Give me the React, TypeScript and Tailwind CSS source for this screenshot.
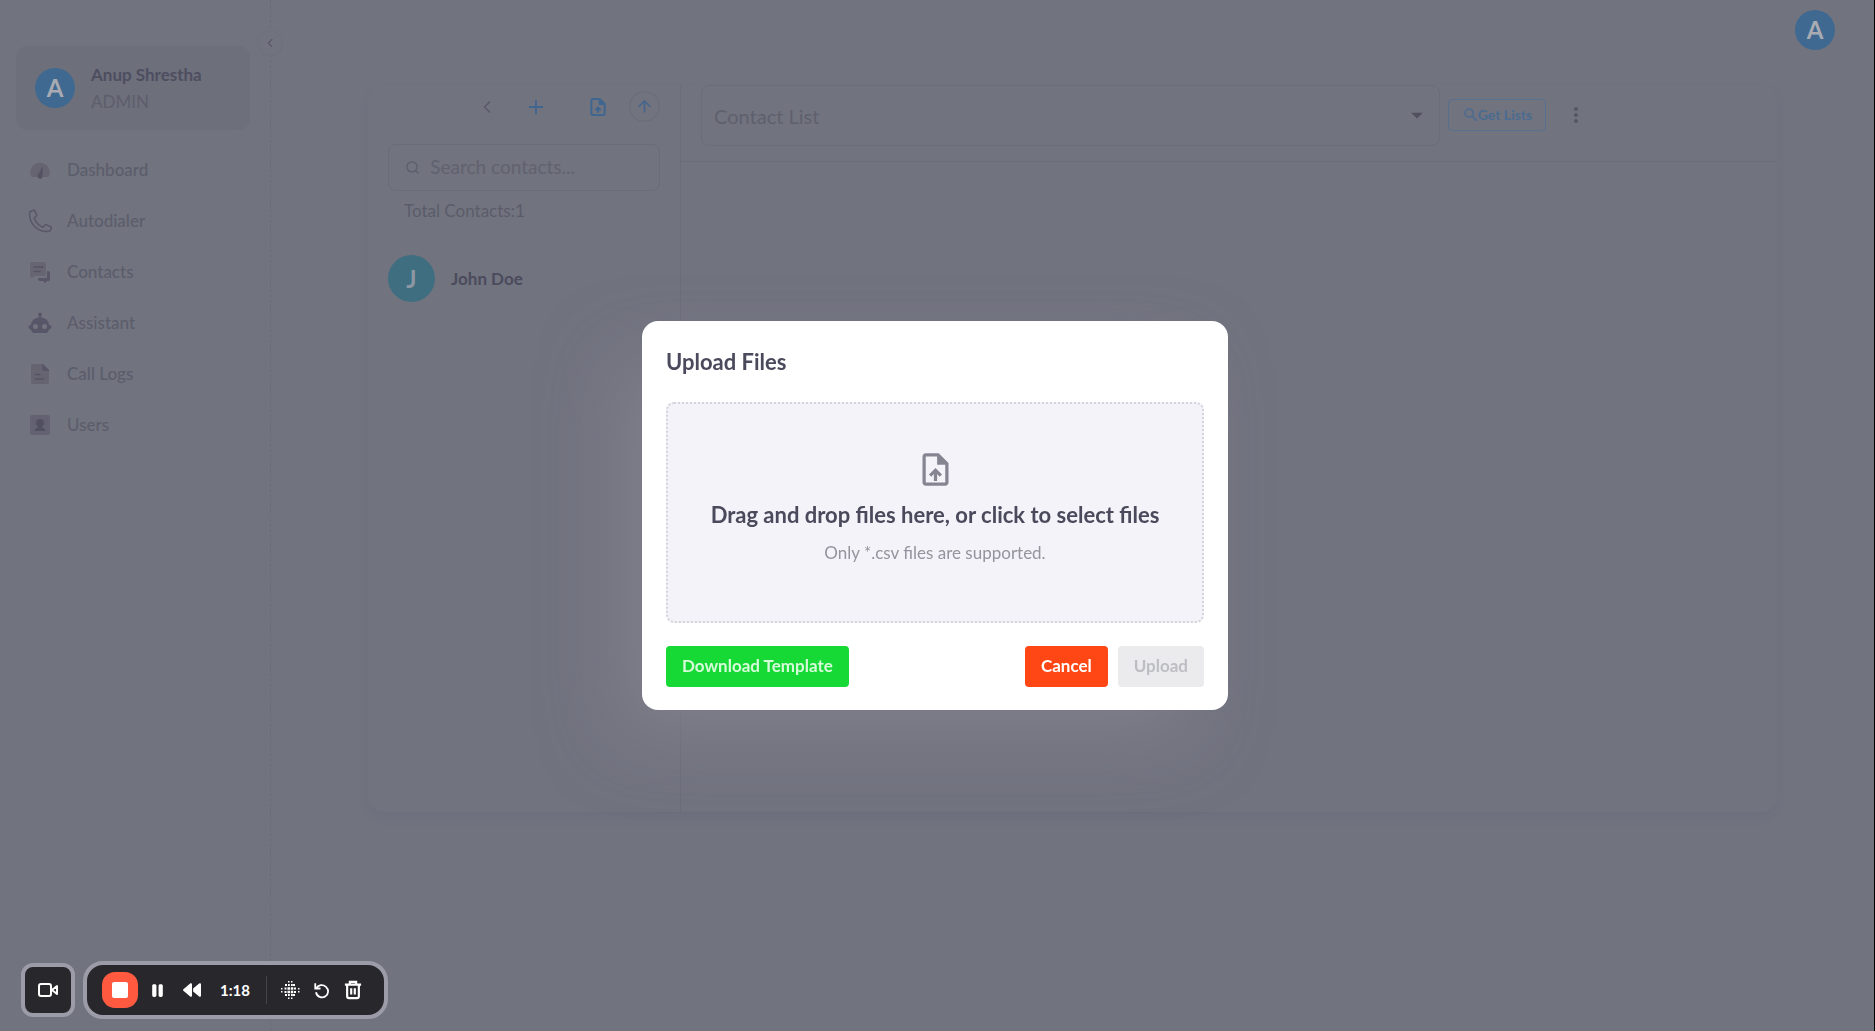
import type { ReactNode } from "react";
import { MdMoreVert, MdSearch, MdUploadFile, MdArrowDropDown } from "react-icons/md";
import { FaPause, FaBackward } from "react-icons/fa6";
import { ArrowUp, ChevronLeft, Plus, Search } from "lucide-react";

const navItems: { label: string; icon: ReactNode }[] = [
  {
    label: "Dashboard",
    icon: (
      <svg viewBox="0 0 24 24" className="size-6">
        <path d="M3.5 19a9.7 9.7 0 1 1 17 0z" fill="#676472" />
        <path d="M14.8 8 10 16.6a2.6 2.6 0 1 0 4.6 1.2z" fill="#555263" />
      </svg>
    ),
  },
  {
    label: "Autodialer",
    icon: (
      <svg viewBox="0 0 24 24" className="size-6" fill="none" stroke="#585868" strokeWidth="1.5" strokeLinejoin="round">
        <path d="M1.5 4.5C1.5 15 9 22.5 19.5 22.5h.8c.8 0 1.500-.4 1.900-1l1.200-2.300c.2-.6 0-1-.5-1.300l-4.600-2.300c-.5-.2-1-.1-1.300.3l-1.400 1.800c-.3.4-.8.5-1.200.3C11 16.500 7.700 13 6.400 9.700c-.2-.4 0-.9.3-1.200l1.700-1.400c.4-.3.5-.8.3-1.300L6.600 1.700C6.300 1.200 5.900 1 5.400 1.200L2.500 2.500c-.6.3-1 1-1 2z" />
      </svg>
    ),
  },
  {
    label: "Contacts",
    icon: (
      <svg viewBox="0 0 24 24" className="size-6">
        <path d="M19 11h1a2 2 0 0 1 2 2v6.500a1.500 1.500 0 0 1-1.500 1.500H19l-2 2-2-2h-3a2 2 0 0 1-2-2v-1h9z" fill="#585667" />
        <path d="M4 2h12a2 2 0 0 1 2 2v10a2 2 0 0 1-2 2H8l-5 2-1-3V4a2 2 0 0 1 2-2z" fill="#686572" />
        <path d="M6 7h9M6 11.500h6" stroke="#555263" strokeWidth="1.500" strokeLinecap="round" />
      </svg>
    ),
  },
  {
    label: "Assistant",
    icon: (
      <svg viewBox="0 0 24 24" className="size-6" fill="#575668">
        <path
          fillRule="evenodd"
          d="M12 1.500a2 2 0 0 1 1 3.700V6.500a8 8 0 0 1 8 7.300c1.500.2 2.500 1 2.500 2.200 0 1.200-.9 2-2.200 2.300L20 21a3 3 0 0 1-2 1H6a3 3 0 0 1-2-1l-1.300-2.700C1.400 18 .5 17.200.5 16s1-2 2.500-2.200a8 8 0 0 1 8-7.300V5.200a2 2 0 0 1 1-3.700zM7.500 13a2.500 2.500 0 1 0 0 5 2.500 2.500 0 0 0 0-5zm9 0a2.500 2.500 0 1 0 0 5 2.500 2.500 0 0 0 0-5z"
        />
      </svg>
    ),
  },
  {
    label: "Call Logs",
    icon: (
      <svg viewBox="0 0 24 24" className="size-6">
        <path d="M5 2h10l6 6v12a2 2 0 0 1-2 2H5a2 2 0 0 1-2-2V4a2 2 0 0 1 2-2z" fill="#676472" />
        <path d="M14 2h1l6 6v1h-4a3 3 0 0 1-3-3z" fill="#585667" />
        <path d="M7.500 12.500h4.500M7.500 17h8" stroke="#555263" strokeWidth="1.500" strokeLinecap="round" />
      </svg>
    ),
  },
  {
    label: "Users",
    icon: (
      <svg viewBox="0 0 24 24" className="size-6">
        <rect x="2" y="2" width="20" height="20" rx="2" fill="#646272" />
        <path d="M12 6a4 4 0 0 1 2.300 7.300v1.500c2 .3 3.200 1.500 3.200 3.200h-11c0-1.700 1.200-2.900 3.200-3.200v-1.500A4 4 0 0 1 12 6z" fill="#515062" />
      </svg>
    ),
  },
];

function Sidebar() {
  return (
    <aside className="relative w-[271px] shrink-0 border-r border-dashed border-[#6b6c7a] pl-4 pr-5 pt-[46px]">
      <button
        aria-label="Collapse sidebar"
        className="absolute top-[30px] -right-[13px] flex size-[26px] items-center justify-center rounded-full border border-dashed border-[#6d6e7b] bg-[#71737f] text-[#5a5a6a]"
      >
        <ChevronLeft size={14} strokeWidth={2} />
      </button>
      <div className="flex h-[84px] items-center gap-4 rounded-xl bg-[#6d6f7b] pl-[19px]">
        <div className="flex size-10 items-center justify-center rounded-full bg-[#3f6990] text-2xl font-bold text-[#a9abb3]">A</div>
        <div className="text-[17px] leading-[27px]">
          <p className="font-bold text-[#4e4e60]">Anup Shrestha</p>
          <p className="text-[#5d5e6c]">ADMIN</p>
        </div>
      </div>
      <nav className="mt-[14px]">
        {navItems.map((item) => (
          <a key={item.label} href="#" className="flex h-[51px] items-center gap-[15px] pl-3 text-[17px] font-medium text-[#5c5d6b]">
            {item.icon}
            {item.label}
          </a>
        ))}
      </nav>
    </aside>
  );
}

function ContactsPanel() {
  return (
    <section className="w-[313px] shrink-0 border-r border-[#6c6d7a] px-5 pt-[6px]">
      <div className="flex items-center justify-end">
        <button aria-label="Back" className="mr-[28px] text-[#5a5a6a]">
          <ChevronLeft size={20} strokeWidth={2} />
        </button>
        <button aria-label="Add contact" className="mr-[41px] text-[#3f6690]">
          <Plus size={22} strokeWidth={2} />
        </button>
        <button aria-label="Import contacts" className="mr-[21px] text-[#3f6690]">
          <svg viewBox="0 0 24 24" className="size-5" fill="none" stroke="currentColor" strokeWidth="2.400" strokeLinejoin="round" strokeLinecap="round">
            <path d="M14 2.500H6a2 2 0 0 0-2 2v15a2 2 0 0 0 2 2h12a2 2 0 0 0 2-2V8.500z" />
            <path d="M14 2.500v6h6z" fill="currentColor" />
            <path d="M12 18v-3M9.500 15 12 12.500l2.500 2.500z" fill="currentColor" />
          </svg>
        </button>
        <button aria-label="Upload" className="flex size-[31px] items-center justify-center rounded-full border border-[#696b79] text-[#46658c]">
          <ArrowUp size={19} strokeWidth={2} />
        </button>
      </div>
      <label className="mt-[22px] flex h-[47px] items-center gap-[10px] rounded-lg border border-[#6a6c79] px-4 text-[#5c5d6c]">
        <Search size={17} strokeWidth={2} />
        <input type="text" aria-label="Search contacts" placeholder="Search contacts..." className="w-full min-w-0 bg-transparent text-[19px] outline-none placeholder:text-[#61626f]" />
      </label>
      <p className="mt-2 pl-4 text-[17px] leading-6 text-[#5b5c6a]">Total Contacts:1</p>
      <div className="mt-8 flex items-center gap-4">
        <div className="flex size-[47px] items-center justify-center rounded-full bg-[#3e6e80] text-2xl font-bold text-[#8c97a3]">J</div>
        <p className="text-[17px] font-bold text-[#4b4b5d]">John Doe</p>
      </div>
    </section>
  );
}

function ListPanel() {
  return (
    <section className="min-w-0 flex-1">
      <div className="flex h-[77px] items-start border-b border-[#6c6d7a] pr-[189px] pl-5">
        <div className="relative min-w-0 flex-1">
          <select aria-label="Contact List" className="h-[61px] w-full appearance-none rounded-lg border border-[#6b6d7a] bg-transparent px-3 text-[20px] text-[#5f606d]">
            <option>Contact List</option>
          </select>
          <MdArrowDropDown size={28} className="pointer-events-none absolute top-4 right-[9px] text-[#50505f]" />
        </div>
        <button className="mt-[14px] ml-2 flex h-8 w-[98px] items-center justify-center rounded border border-[#57708f] text-sm font-bold text-[#4b6b90]">
          <MdSearch size={18} className="-mr-[2px] shrink-0" />
          Get Lists
        </button>
        <button aria-label="More" className="mt-[18px] ml-[18px] text-[#565667]">
          <MdMoreVert size={24} />
        </button>
      </div>
    </section>
  );
}

function UploadDialog() {
  return (
    <div className="fixed inset-0 flex items-center justify-center pr-[5px] pb-px">
      <div
        role="dialog"
        aria-labelledby="upload-title"
        className="w-[586px] rounded-2xl bg-white px-6 pt-6 pb-[23px] shadow-[-32px_32px_72px_-8px_rgba(144,138,152,0.5)]"
      >
        <h2 id="upload-title" className="text-[22px] leading-[34px] font-bold text-[#4a4a5c]">Upload Files</h2>
        <label className="mt-[23px] flex h-[221px] w-full cursor-pointer flex-col items-center rounded-lg border-2 border-dotted border-[#d4d4da] bg-[#f4f3f9] pt-[46px]">
          <input type="file" accept=".csv" className="sr-only" />
          <MdUploadFile size={39} className="text-[#858592]" />
          <span className="mt-[10px] text-[22px] leading-8 font-bold text-[#4a4a5c]">Drag and drop files here, or click to select files</span>
          <span className="mt-[10px] text-[17px] leading-6 text-[#94949e]">Only *.csv files are supported.</span>
        </label>
        <div className="mt-[23px] flex h-[41px] gap-[10px] text-[17px] font-bold">
          <button className="mr-auto rounded bg-[#17d936] px-4 text-[#d6fbd9]">Download Template</button>
          <button className="rounded bg-[#ff4716] px-4 text-white">Cancel</button>
          <button disabled className="rounded bg-[#ebebee] px-4 text-[#bdbdc4]">Upload</button>
        </div>
      </div>
    </div>
  );
}

function BlurIcon() {
  return (
    <svg viewBox="0 0 20 20" className="size-5" fill="currentColor">
      <path d="M5 4h2v2H5zM5 14h2v2H5zM13 4h2v2h-2zM13 14h2v2h-2zM8 1h1.500v1.500H8zM11 1h1.500v1.500H11zM8 17.500h1.500V19H8zM11 17.500h1.500V19H11zM1 8h1.500v1.500H1zM1 11h1.500v1.500H1zM18 8h1.500v1.500H18zM18 11h1.500v1.500H18z" />
      <path d="M8 4h1.800v2H8zM11 4h1.800v2H11zM8 14h1.800v2H8zM11 14h1.800v2H11zM4.500 7.500h2v2h-2zM4.500 11h2v2h-2zM14 7.500h2v2h-2zM14 11h2v2h-2zM7.500 7.300h2.500v2.500H7.500zM10.800 7.300h2.500v2.500h-2.500zM7.500 10.700h2.500v2.500H7.500zM10.800 10.700h2.500v2.500h-2.500z" />
    </svg>
  );
}

function RecorderBar() {
  return (
    <div className="fixed bottom-3 left-[21px] flex items-center gap-2 text-white">
      <button aria-label="Camera" className="flex size-[54px] items-center justify-center rounded-xl border-4 border-[#9c9ca8] bg-[#28272b]">
        <svg viewBox="0 0 22 18" className="h-[18px] w-[22px]" fill="none" stroke="currentColor" strokeWidth="2" strokeLinejoin="round">
          <rect x="2" y="3" width="12" height="12" rx="2" />
          <path d="m15 9 5-4v8z" />
        </svg>
      </button>
      <div className="flex h-[58px] items-center rounded-[20px] border-4 border-[#9c9ca8] bg-[#28272b] pr-[22px] pl-[15px]">
        <button aria-label="Stop" className="flex size-[36px] items-center justify-center rounded-[13px] bg-[#ff5a40]">
          <span className="size-4 rounded-xs bg-white" />
        </button>
        <button aria-label="Pause" className="ml-[11px]">
          <FaPause size={17} />
        </button>
        <button aria-label="Rewind" className="ml-[17px]">
          <FaBackward size={18} />
        </button>
        <span className="ml-[19px] text-[15px] leading-5 font-bold">1:18</span>
        <span className="ml-4 h-7 w-px bg-[#45444a]" />
        <button aria-label="Blur" className="ml-[13px]">
          <BlurIcon />
        </button>
        <button aria-label="Restart" className="ml-[13px]">
          <svg viewBox="0 0 24 24" className="size-[18px]" fill="none" stroke="currentColor" strokeWidth="2.400">
            <path d="M3 3v7h7" />
            <path d="M4 10c3-5 9-6 13-2.500 4.500 4 4 10-.5 13C11.500 23.500 5 21 4 15" />
          </svg>
        </button>
        <button aria-label="Delete" className="ml-[13px]">
          <svg viewBox="0 0 20 22" className="h-[20px] w-[18px]" fill="none" stroke="currentColor" strokeWidth="2.400">
            <path d="M1 5h18M6.500 5V2h7v3M3.500 5v13a2 2 0 0 0 2 2h9a2 2 0 0 0 2-2V5M8 9v7M12 9v7" />
          </svg>
        </button>
      </div>
    </div>
  );
}

export default function App() {
  return (
    <div className="flex min-h-screen border-r border-black bg-[#71737f] font-['Lato',sans-serif]">
      <Sidebar />
      <main className="min-w-0 flex-1">
        <header className="flex h-[85px] justify-end pt-[10px] pr-[39px]">
          <button className="flex size-10 items-center justify-center rounded-full bg-[#3f6990] text-2xl font-bold text-[#a9abb3]">A</button>
        </header>
        <div className="mr-[97px] ml-[97px] flex h-[727px] rounded-2xl shadow-[0_6px_10px_-2px_rgba(98,99,115,0.25)]">
          <ContactsPanel />
          <ListPanel />
        </div>
      </main>
      <UploadDialog />
      <RecorderBar />
    </div>
  );
}
